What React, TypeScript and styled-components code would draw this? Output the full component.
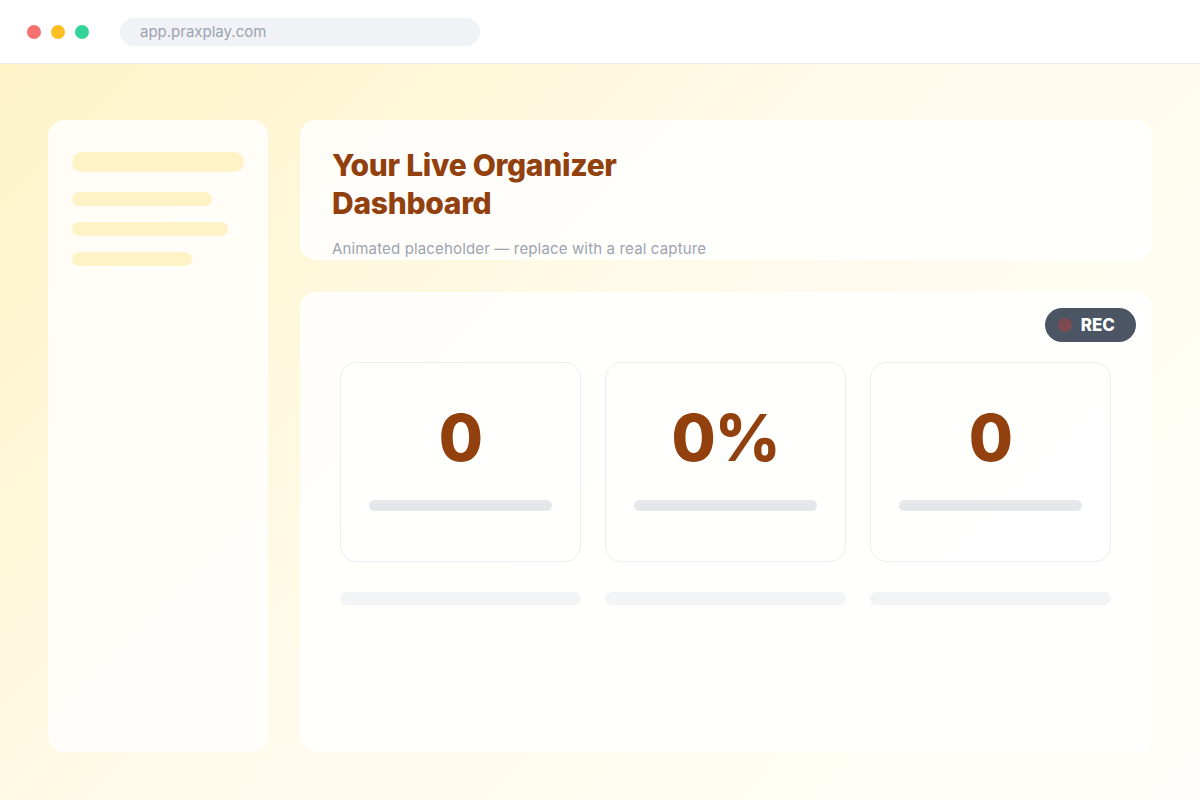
import React from 'react';
import styled, { createGlobalStyle } from 'styled-components';

const GlobalStyle = createGlobalStyle`
  html, body {
    margin: 0;
    padding: 0;
    width: 1200px;
    height: 800px;
    overflow: hidden;
    font-family: Inter, "Liberation Sans", Arial, sans-serif;
    background: #ffffff;
  }
  * {
    box-sizing: border-box;
  }
`;

const Window = styled.div`
  display: flex;
  flex-direction: column;
  width: 1200px;
  height: 800px;
`;

const TitleBar = styled.header`
  display: flex;
  align-items: center;
  height: 64px;
  padding: 0 27px;
  gap: 31px;
  background: #ffffff;
  border-bottom: 1px solid #eceae4;
`;

const Dots = styled.div`
  display: flex;
  gap: 10px;
`;

const Dot = styled.span<{ $color: string }>`
  width: 14px;
  height: 14px;
  border-radius: 50%;
  background: ${p => p.$color};
`;

const UrlBar = styled.div`
  display: flex;
  align-items: center;
  width: 360px;
  height: 28px;
  padding: 0 20px;
  border-radius: 14px;
  background: #f1f2f5;
  color: #9ca3af;
  font-size: 15px;
`;

const Stage = styled.main`
  flex: 1;
  display: grid;
  grid-template-columns: 220px 1fr;
  gap: 32px;
  padding: 56px 48px 48px;
  background: linear-gradient(135deg, #fef3c7 0%, #fffbeb 48%, #fffefa 100%);
`;

const Sidebar = styled.aside`
  display: flex;
  flex-direction: column;
  gap: 16px;
  padding: 32px 24px;
  border-radius: 16px;
  background: rgba(255, 255, 255, 0.8);
`;

const SideBar = styled.div<{ $w: number; $h: number }>`
  width: ${p => p.$w}px;
  height: ${p => p.$h}px;
  border-radius: 10px;
  background: #fef3c7;
  margin-bottom: ${p => (p.$h > 16 ? 4 : 0)}px;
`;

const Column = styled.div`
  display: flex;
  flex-direction: column;
  gap: 32px;
`;

const HeaderCard = styled.section`
  height: 140px;
  overflow: hidden;
  padding: 26px 32px 0;
  border-radius: 16px;
  background: rgba(255, 255, 255, 0.85);
`;

const Title = styled.h1`
  margin: 0;
  font-size: 30px;
  line-height: 38px;
  font-weight: 800;
  color: #92400e;
  letter-spacing: -0.3px;
`;

const Subtitle = styled.p`
  margin: 17px 0 0;
  font-size: 15px;
  line-height: 20px;
  color: #9ca3af;
  letter-spacing: 0.15px;
`;

const Panel = styled.section`
  position: relative;
  flex: 1;
  padding: 70px 41px 0 40px;
  border-radius: 16px;
  background: rgba(255, 255, 255, 0.85);
`;

const RecPill = styled.div`
  position: absolute;
  top: 16px;
  right: 16px;
  display: flex;
  align-items: center;
  gap: 9px;
  height: 34px;
  padding: 0 21px 0 13px;
  border-radius: 17px;
  background: #4b5563;
  color: #ffffff;
  font-size: 17px;
  font-weight: 800;
`;

const RecDot = styled.span`
  width: 14px;
  height: 14px;
  border-radius: 50%;
  background: #7d4a52;
`;

const StatGrid = styled.div`
  display: grid;
  grid-template-columns: repeat(3, 1fr);
  column-gap: 24px;
  row-gap: 30px;
`;

const StatCard = styled.div`
  display: flex;
  flex-direction: column;
  align-items: center;
  height: 200px;
  padding: 36px 28px 0;
  border: 1px solid #eceef1;
  border-radius: 16px;
  background: rgba(255, 255, 255, 0.6);
`;

const StatValue = styled.div`
  font-size: 64px;
  line-height: 78px;
  font-weight: 800;
  color: #92400e;
  letter-spacing: -1px;
`;

const StatBar = styled.div`
  width: 100%;
  height: 11px;
  margin-top: 23px;
  border-radius: 6px;
  background: #e5e7eb;
`;

const FootBar = styled.div`
  height: 13px;
  border-radius: 7px;
  background: #f3f4f6;
`;

const stats = ['0', '0%', '0'];

export default function App() {
  return (
    <>
      <GlobalStyle />
      <Window>
        <TitleBar>
          <Dots>
            <Dot $color="#f87171" />
            <Dot $color="#fbbf24" />
            <Dot $color="#34d399" />
          </Dots>
          <UrlBar>app.praxplay.com</UrlBar>
        </TitleBar>
        <Stage>
          <Sidebar>
            <SideBar $w={172} $h={20} />
            <SideBar $w={140} $h={14} />
            <SideBar $w={156} $h={14} />
            <SideBar $w={120} $h={14} />
          </Sidebar>
          <Column>
            <HeaderCard>
              <Title>
                Your Live Organizer
                <br />
                Dashboard
              </Title>
              <Subtitle>Animated placeholder — replace with a real capture</Subtitle>
            </HeaderCard>
            <Panel>
              <RecPill>
                <RecDot />
                REC
              </RecPill>
              <StatGrid>
                {stats.map((s, i) => (
                  <StatCard key={i}>
                    <StatValue>{s}</StatValue>
                    <StatBar />
                  </StatCard>
                ))}
                {stats.map((_, i) => (
                  <FootBar key={'f' + i} />
                ))}
              </StatGrid>
            </Panel>
          </Column>
        </Stage>
      </Window>
    </>
  );
}
